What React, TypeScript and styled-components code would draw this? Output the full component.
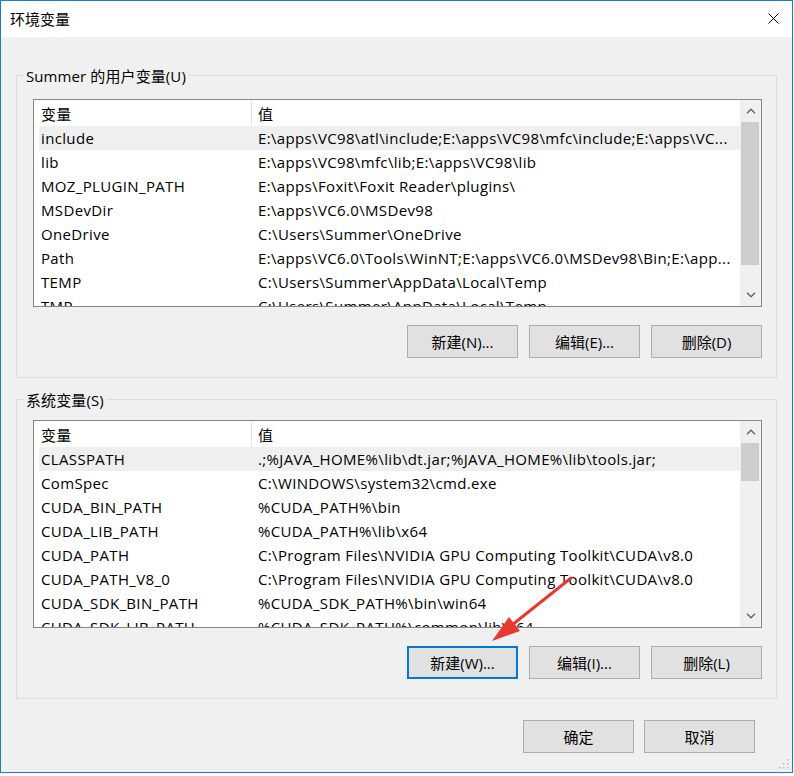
import React from "react";
import styled, { createGlobalStyle } from "styled-components";

const GlobalStyle = createGlobalStyle`
  html, body {
    margin: 0;
    padding: 0;
    background: #ffffff;
  }
  * {
    box-sizing: border-box;
  }
`;

type EnvVar = { name: string; value: string };

const userVars: EnvVar[] = [
  { name: "include", value: "E:\\apps\\VC98\\atl\\include;E:\\apps\\VC98\\mfc\\include;E:\\apps\\VC..." },
  { name: "lib", value: "E:\\apps\\VC98\\mfc\\lib;E:\\apps\\VC98\\lib" },
  { name: "MOZ_PLUGIN_PATH", value: "E:\\apps\\Foxit\\Foxit Reader\\plugins\\" },
  { name: "MSDevDir", value: "E:\\apps\\VC6.0\\MSDev98" },
  { name: "OneDrive", value: "C:\\Users\\Summer\\OneDrive" },
  { name: "Path", value: "E:\\apps\\VC6.0\\Tools\\WinNT;E:\\apps\\VC6.0\\MSDev98\\Bin;E:\\app..." },
  { name: "TEMP", value: "C:\\Users\\Summer\\AppData\\Local\\Temp" },
  { name: "TMP", value: "C:\\Users\\Summer\\AppData\\Local\\Temp" },
];

const systemVars: EnvVar[] = [
  { name: "CLASSPATH", value: ".;%JAVA_HOME%\\lib\\dt.jar;%JAVA_HOME%\\lib\\tools.jar;" },
  { name: "ComSpec", value: "C:\\WINDOWS\\system32\\cmd.exe" },
  { name: "CUDA_BIN_PATH", value: "%CUDA_PATH%\\bin" },
  { name: "CUDA_LIB_PATH", value: "%CUDA_PATH%\\lib\\x64" },
  { name: "CUDA_PATH", value: "C:\\Program Files\\NVIDIA GPU Computing Toolkit\\CUDA\\v8.0" },
  { name: "CUDA_PATH_V8_0", value: "C:\\Program Files\\NVIDIA GPU Computing Toolkit\\CUDA\\v8.0" },
  { name: "CUDA_SDK_BIN_PATH", value: "%CUDA_SDK_PATH%\\bin\\win64" },
  { name: "CUDA_SDK_LIB_PATH", value: "%CUDA_SDK_PATH%\\common\\lib\\x64" },
];

const Chevron: React.FC<{ up?: boolean }> = ({ up }) => (
  <svg width="10" height="6" viewBox="0 0 10 6">
    <path
      d={up ? "M1 5.2 L5 1.2 L9 5.2" : "M1 0.8 L5 4.8 L9 0.8"}
      fill="none"
      stroke="#606060"
      strokeWidth="1.3"
    />
  </svg>
);

const VarList: React.FC<{ vars: EnvVar[]; thumbHeight: number }> = ({ vars, thumbHeight }) => (
  <List>
    <ListBody>
      <Header>
        <HeaderCell>变量</HeaderCell>
        <HeaderCell $last>值</HeaderCell>
      </Header>
      {vars.map((v, i) => (
        <Row key={v.name} $selected={i === 0}>
          <NameCell>{v.name}</NameCell>
          <ValueCell>{v.value}</ValueCell>
        </Row>
      ))}
    </ListBody>
    <ScrollBar>
      <ScrollArrow>
        <Chevron up />
      </ScrollArrow>
      <Track>
        <Thumb $height={thumbHeight} />
      </Track>
      <ScrollArrow>
        <Chevron />
      </ScrollArrow>
    </ScrollBar>
  </List>
);

const App: React.FC = () => (
  <>
    <GlobalStyle />
    <Window>
      <TitleBar>
        <Title>环境变量</Title>
        <Close>
          <svg width="11" height="11" viewBox="0 0 11 11">
            <path d="M0.5 0.5 L10.5 10.5 M10.5 0.5 L0.5 10.5" stroke="#000" strokeWidth="1" />
          </svg>
        </Close>
      </TitleBar>
      <Body>
        <Group>
          <GroupLabel>Summer 的用户变量(U)</GroupLabel>
          <ListSlot $gap={12}>
            <VarList vars={userVars} thumbHeight={143} />
          </ListSlot>
          <ButtonRow>
            <Button>新建(N)...</Button>
            <Button>编辑(E)...</Button>
            <Button>删除(D)</Button>
          </ButtonRow>
        </Group>

        <Group $spaced>
          <GroupLabel>系统变量(S)</GroupLabel>
          <ListSlot $gap={9}>
            <VarList vars={systemVars} thumbHeight={38} />
          </ListSlot>
          <ButtonRow>
            <Button $focused>新建(W)...</Button>
            <Button>编辑(I)...</Button>
            <Button>删除(L)</Button>
          </ButtonRow>
        </Group>

        <Footer>
          <Button>确定</Button>
          <Button>取消</Button>
        </Footer>
      </Body>

      <ArrowOverlay width="793" height="773" viewBox="0 0 793 773">
        <line x1="571" y1="578" x2="512" y2="625" stroke="#e8382f" strokeWidth="3" strokeLinecap="round" />
        <polygon points="492,641 520,631 509,617" fill="#e8382f" />
      </ArrowOverlay>
      <Grip width="10" height="10" viewBox="0 0 10 10">
        <rect x="8" y="0" width="1.5" height="1.5" fill="#b8b8b8" />
        <rect x="4" y="4" width="1.5" height="1.5" fill="#b8b8b8" />
        <rect x="8" y="4" width="1.5" height="1.5" fill="#b8b8b8" />
        <rect x="0" y="8" width="1.5" height="1.5" fill="#b8b8b8" />
        <rect x="4" y="8" width="1.5" height="1.5" fill="#b8b8b8" />
        <rect x="8" y="8" width="1.5" height="1.5" fill="#b8b8b8" />
      </Grip>
    </Window>
  </>
);

export default App;

const Window = styled.div`
  position: relative;
  display: flex;
  flex-direction: column;
  width: 793px;
  height: 773px;
  border: 1px solid #1c7cd0;
  background: #f0f0f0;
  font-family: "Open Sans", "Noto Sans CJK SC", sans-serif;
  font-size: 15px;
  color: #000;
`;
const TitleBar = styled.div`
  display: flex;
  align-items: center;
  justify-content: space-between;
  height: 36px;
  padding: 0 13px 0 9px;
  background: #ffffff;
`;
const Title = styled.div`
  font-size: 15px;
  line-height: 20px;
`;
const Close = styled.div`
  display: flex;
  align-items: center;
  margin-top: -1px;
`;
const Body = styled.div`
  flex: 1;
  display: flex;
  flex-direction: column;
  padding: 38px 15px 0 15px;
`;
const Group = styled.div<{ $spaced?: boolean }>`
  display: flex;
  flex-direction: column;
  width: 761px;
  margin-top: ${(p) => (p.$spaced ? "21px" : "0")};
  padding: 0 14px 19px 16px;
  border: 1px solid #dcdcdc;
`;
const GroupLabel = styled.div`
  align-self: flex-start;
  margin: -11px 0 0 -9px;
  padding: 0 2px;
  height: 22px;
  line-height: 22px;
  background: #f0f0f0;
  white-space: nowrap;
  letter-spacing: 0.1px;
`;
const ListSlot = styled.div<{ $gap: number }>`
  margin-top: ${(p) => p.$gap}px;
`;
const List = styled.div`
  display: flex;
  width: 729px;
  height: 208px;
  border: 1px solid #828790;
  background: #ffffff;
  overflow: hidden;
`;
const ListBody = styled.div`
  flex: 1;
  min-width: 0;
  display: flex;
  flex-direction: column;
  overflow: hidden;
  letter-spacing: 0.35px;
`;
const Header = styled.div`
  display: flex;
  flex: none;
  height: 26px;
  align-items: stretch;
`;
const HeaderCell = styled.div<{ $last?: boolean }>`
  display: flex;
  align-items: center;
  width: ${(p) => (p.$last ? "auto" : "218px")};
  flex: ${(p) => (p.$last ? "1" : "none")};
  padding-left: ${(p) => (p.$last ? "6px" : "7px")};
  border-right: ${(p) => (p.$last ? "none" : "1px solid #e5e5e5")};
`;
const Row = styled.div<{ $selected?: boolean }>`
  display: flex;
  flex: none;
  align-items: center;
  height: 24px;
  margin-left: 5px;
  background: ${(p) => (p.$selected ? "#efefef" : "transparent")};
  white-space: nowrap;
`;
const NameCell = styled.div`
  flex: none;
  width: 219px;
  padding-left: 2px;
`;
const ValueCell = styled.div`
  flex: 1;
  overflow: hidden;
`;
const ScrollBar = styled.div`
  display: flex;
  flex-direction: column;
  flex: none;
  width: 21px;
  background: #f0f0f0;
`;
const ScrollArrow = styled.div`
  display: flex;
  align-items: center;
  justify-content: center;
  flex: none;
  height: 22px;
`;
const Track = styled.div`
  flex: 1;
  display: flex;
  flex-direction: column;
`;
const Thumb = styled.div<{ $height: number }>`
  height: ${(p) => p.$height}px;
  margin: 0 2px 0 1px;
  background: #cdcdcd;
`;
const ButtonRow = styled.div`
  display: flex;
  justify-content: flex-end;
  gap: 11px;
  margin-top: 18px;
`;
const Button = styled.div<{ $focused?: boolean }>`
  display: flex;
  align-items: center;
  justify-content: center;
  width: 111px;
  height: 33px;
  background: #e1e1e1;
  border: ${(p) => (p.$focused ? "2px solid #0078d7" : "1px solid #adadad")};
  font-size: 15px;
  white-space: nowrap;
`;
const Footer = styled.div`
  display: flex;
  justify-content: flex-end;
  gap: 10px;
  margin-top: 21px;
  padding-right: 22px;
`;
const ArrowOverlay = styled.svg`
  position: absolute;
  left: -1px;
  top: -1px;
  pointer-events: none;
`;
const Grip = styled.svg`
  position: absolute;
  right: 3px;
  bottom: 3px;
`;
